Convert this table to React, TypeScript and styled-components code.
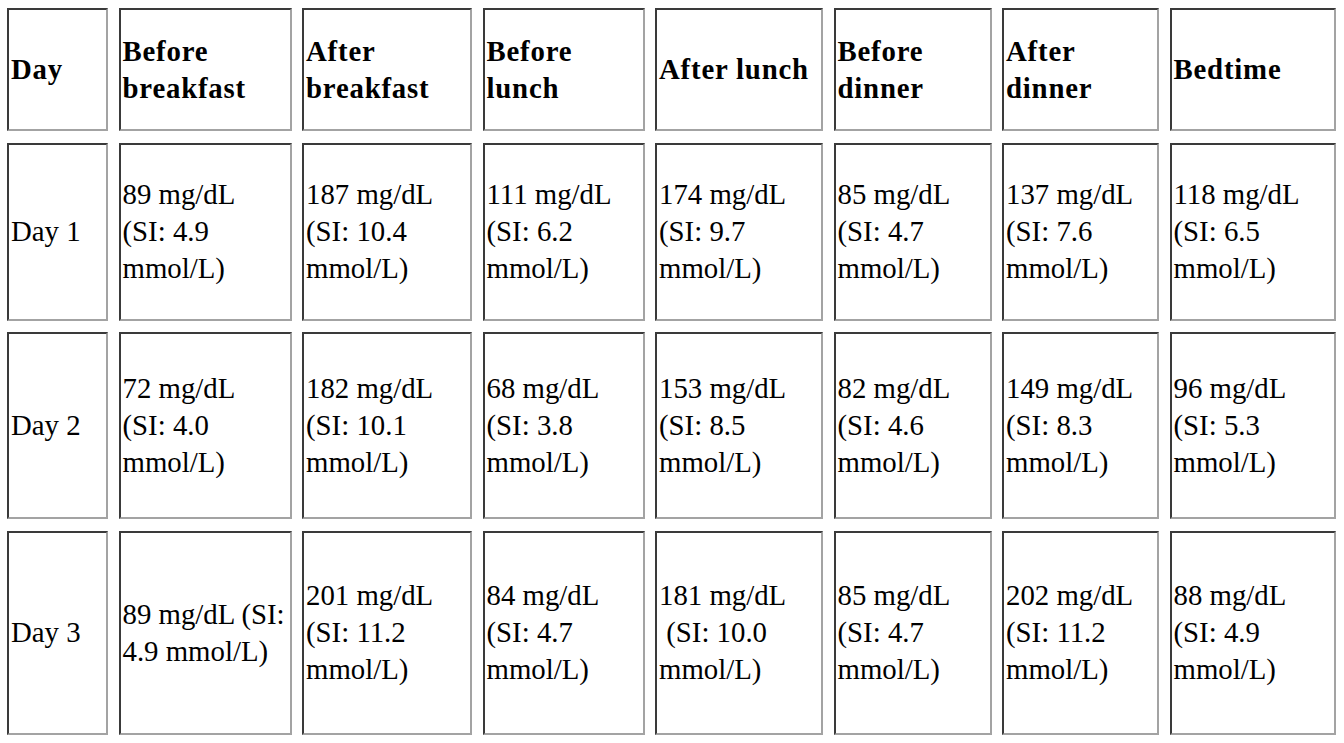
import React from 'react';
import styled, {createGlobalStyle} from 'styled-components';

const GlobalStyle = createGlobalStyle`
  html, body {
    margin: 0;
    padding: 0;
    background: #ffffff;
  }
  body {
    font-family: "Liberation Serif", "Times New Roman", serif;
    color: #000000;
  }
`;

const columnWidths = [101, 173, 170, 162, 168, 158, 157, 166];
const rowHeights = [123, 178, 187, 204];

const Grid = styled.div`
  display: grid;
  grid-template-columns: ${columnWidths.map(w => `${w}px`).join(' ')};
  grid-template-rows: ${rowHeights.map(h => `${h}px`).join(' ')};
  column-gap: 10.5px;
  row-gap: 11.5px;
  padding: 8px 0 0 7px;
`;

const Cell = styled.div<{$header?: boolean}>`
  box-sizing: border-box;
  display: flex;
  flex-direction: column;
  justify-content: center;
  border: 2px solid;
  border-color: #3a3a3a #a3a3a3 #a3a3a3 #3a3a3a;
  padding: 0 2px 0 2px;
  font-size: 28.8px;
  line-height: 36.7px;
  font-weight: ${p => (p.$header ? 700 : 400)};
  letter-spacing: ${p => (p.$header ? '0.8px' : '0')};
  white-space: nowrap;
  overflow: hidden;
`;

const Line = styled.span`
  display: block;
`;

const headers: string[][] = [
  ['Day'],
  ['Before', 'breakfast'],
  ['After', 'breakfast'],
  ['Before', 'lunch'],
  ['After lunch'],
  ['Before', 'dinner'],
  ['After', 'dinner'],
  ['Bedtime'],
];

const rows: string[][][] = [
  [
    ['Day 1'],
    ['89 mg/dL', '(SI: 4.9', 'mmol/L)'],
    ['187 mg/dL', '(SI: 10.4', 'mmol/L)'],
    ['111 mg/dL', '(SI: 6.2', 'mmol/L)'],
    ['174 mg/dL', '(SI: 9.7', 'mmol/L)'],
    ['85 mg/dL', '(SI: 4.7', 'mmol/L)'],
    ['137 mg/dL', '(SI: 7.6', 'mmol/L)'],
    ['118 mg/dL', '(SI: 6.5', 'mmol/L)'],
  ],
  [
    ['Day 2'],
    ['72 mg/dL', '(SI: 4.0', 'mmol/L)'],
    ['182 mg/dL', '(SI: 10.1', 'mmol/L)'],
    ['68 mg/dL', '(SI: 3.8', 'mmol/L)'],
    ['153 mg/dL', '(SI: 8.5', 'mmol/L)'],
    ['82 mg/dL', '(SI: 4.6', 'mmol/L)'],
    ['149 mg/dL', '(SI: 8.3', 'mmol/L)'],
    ['96 mg/dL', '(SI: 5.3', 'mmol/L)'],
  ],
  [
    ['Day 3'],
    ['89 mg/dL (SI:', '4.9 mmol/L)'],
    ['201 mg/dL', '(SI: 11.2', 'mmol/L)'],
    ['84 mg/dL', '(SI: 4.7', 'mmol/L)'],
    ['181 mg/dL', '\u00a0(SI: 10.0', 'mmol/L)'],
    ['85 mg/dL', '(SI: 4.7', 'mmol/L)'],
    ['202 mg/dL', '(SI: 11.2', 'mmol/L)'],
    ['88 mg/dL', '(SI: 4.9', 'mmol/L)'],
  ],
];

const TableCell: React.FC<{lines: string[]; header?: boolean}> = ({lines, header}) => (
  <Cell $header={header} role={header ? 'columnheader' : 'cell'}>
    {lines.map((line, i) => (
      <Line key={i}>{line}</Line>
    ))}
  </Cell>
);

export default function App() {
  return (
    <>
      <GlobalStyle/>
      <Grid role="table">
        {headers.map((h, i) => (
          <TableCell key={`h${i}`} lines={h} header/>
        ))}
        {rows.map((row, r) =>
          row.map((cell, c) => <TableCell key={`${r}-${c}`} lines={cell}/>)
        )}
      </Grid>
    </>
  );
}
